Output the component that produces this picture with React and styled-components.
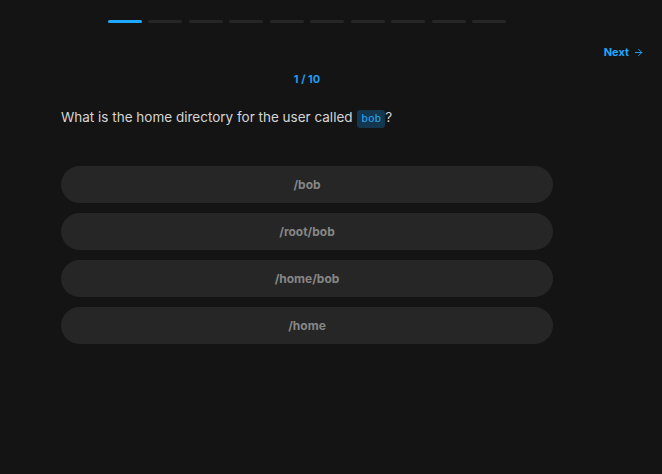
import styled, { createGlobalStyle } from 'styled-components'

const GlobalStyle = createGlobalStyle`
    html, body {
        margin: 0;
        background: #141414;
        font-family: Inter, Roboto, "Liberation Sans", sans-serif;
    }
`

const Page = styled.div`
    min-height: 474px;
    background: #141414;
    padding: 20px 18px 0 61px;
    box-sizing: border-box;
`
const Column = styled.div`
    width: 492px;
`
const Progress = styled.div`
    display: flex;
    gap: 6.5px;
    width: 398px;
    margin: 0 auto;
`
const Segment = styled.div`
    flex: 1;
    height: 3px;
    border-radius: 2px;
    background: ${(p) => (p.$active ? '#1fa8ff' : '#262626')};
`
const TopRow = styled.div`
    display: flex;
    justify-content: flex-end;
    margin-top: 21px;
    height: 16px;
`
const NextButton = styled.button`
    display: flex;
    align-items: center;
    gap: 4px;
    background: none;
    border: none;
    padding: 0;
    color: #1fa8ff;
    font-family: inherit;
    font-size: 11px;
    font-weight: 700;
    cursor: pointer;
`
const Counter = styled.div`
    text-align: center;
    color: #1f9cf0;
    font-size: 11px;
    font-weight: 700;
    margin-top: 12px;
`
const Question = styled.p`
    margin: 21px 0 0;
    color: #d6d6d6;
    font-size: 13.5px;
    line-height: 20px;
`
const Code = styled.code`
    display: inline-block;
    background: #13374f;
    color: #2aa6f5;
    font-family: "DejaVu Sans Mono", monospace;
    font-size: 11px;
    line-height: 18px;
    padding: 0 4px;
    border-radius: 3px;
    margin-left: 1px;
`
const Options = styled.div`
    display: flex;
    flex-direction: column;
    gap: 10px;
    margin-top: 38px;
`
const Option = styled.button`
    height: 37px;
    border: none;
    border-radius: 19px;
    background: #262626;
    color: #868686;
    font-family: inherit;
    font-size: 12px;
    font-weight: 700;
    cursor: pointer;
`

const answers = ['/bob', '/root/bob', '/home/bob', '/home']

const App = () => {
    return (
        <Page>
            <GlobalStyle />
            <Column>
                <Progress>
                    {Array.from({ length: 10 }).map((_, i) => (
                        <Segment key={i} $active={i === 0} />
                    ))}
                </Progress>
            </Column>
            <TopRow>
                <NextButton>
                    Next
                    <svg width="11" height="11" viewBox="0 0 24 24" fill="none" stroke="currentColor" strokeWidth="2" strokeLinecap="round" strokeLinejoin="round">
                        <path d="M5 12h14" />
                        <path d="m12 5 7 7-7 7" />
                    </svg>
                </NextButton>
            </TopRow>
            <Column>
                <Counter>1 / 10</Counter>
                <Question>
                    What is the home directory for the user called <Code>bob</Code>?
                </Question>
                <Options>
                    {answers.map((a) => (
                        <Option key={a}>{a}</Option>
                    ))}
                </Options>
            </Column>
        </Page>
    )
}

export default App
